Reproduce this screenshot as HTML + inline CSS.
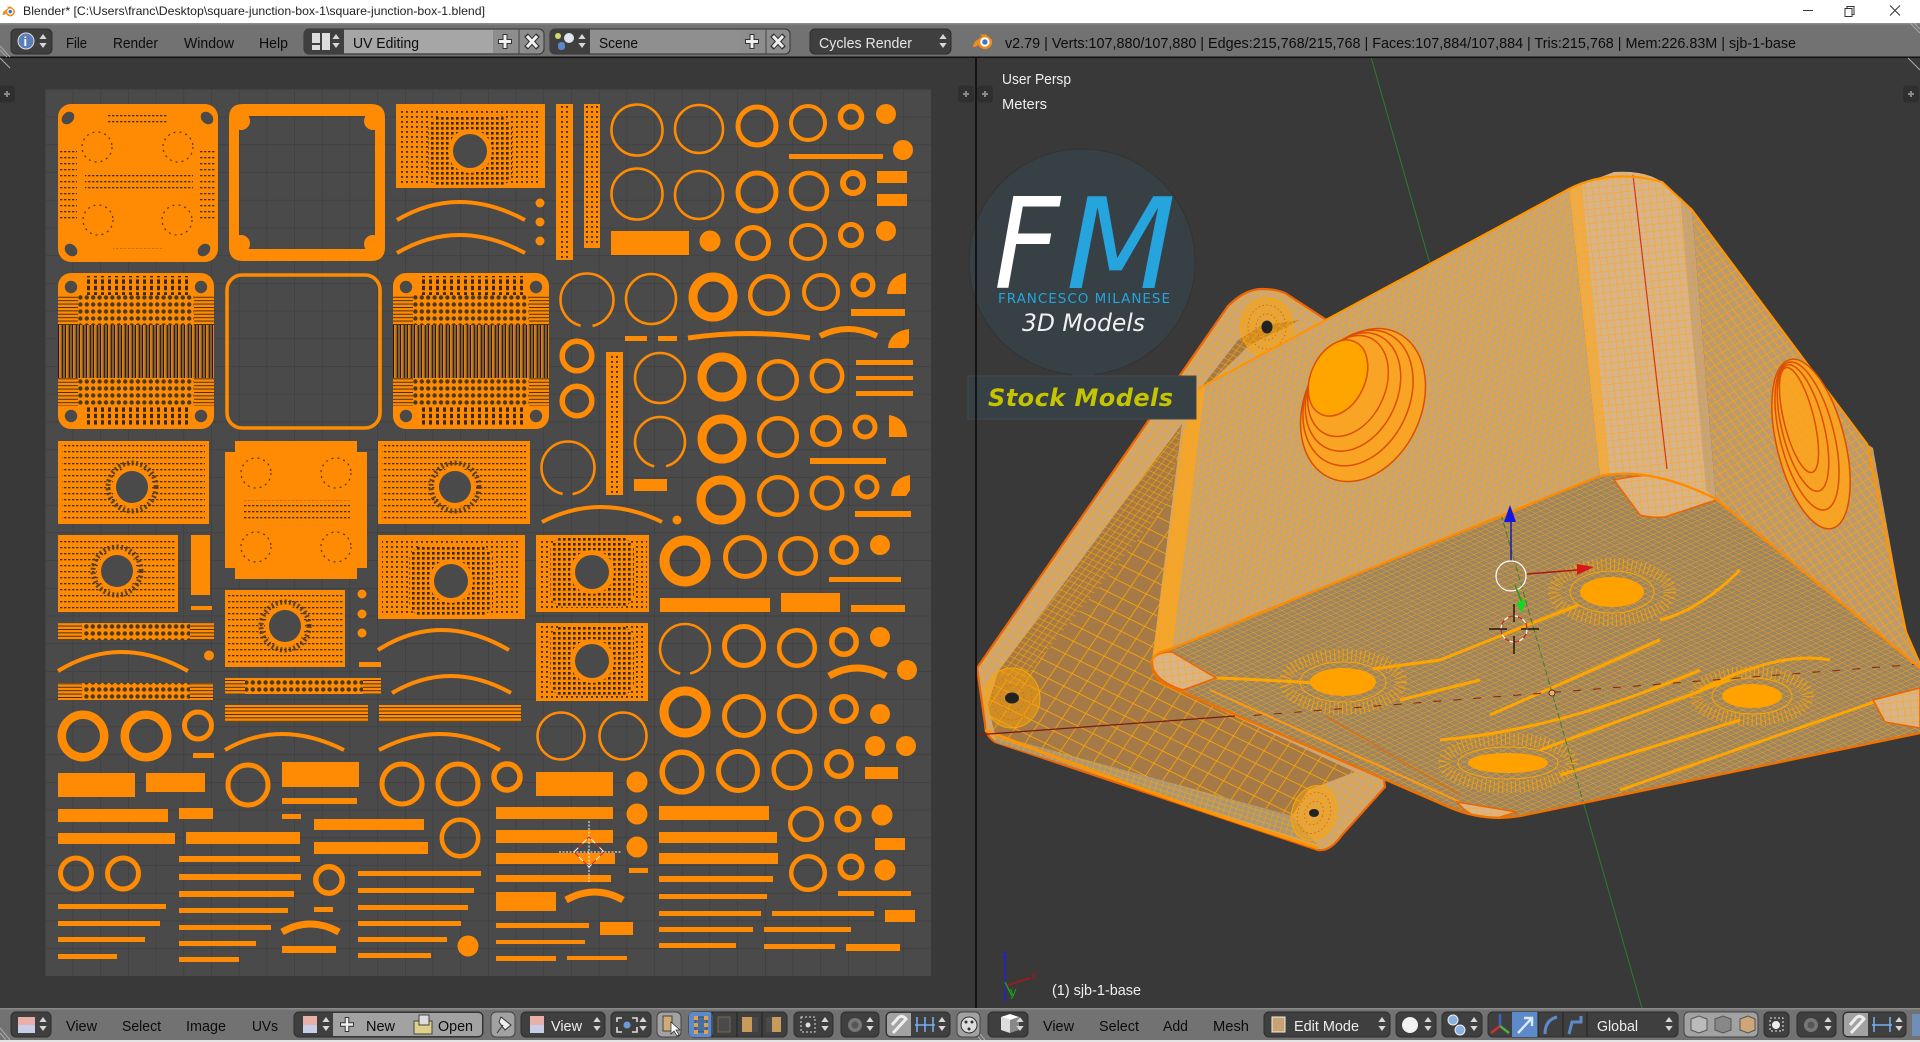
<!DOCTYPE html>
<html lang="en"><head><meta charset="utf-8"><title>Blender</title>
<style>
html,body{margin:0;padding:0;background:#393939;overflow:hidden}
svg{display:block;font-family:"Liberation Sans",sans-serif}
.h{font-size:15px;fill:#0c0c0c}
.w{font-size:15px;fill:#eee}
</style></head><body>
<svg xmlns="http://www.w3.org/2000/svg" width="1920" height="1042" viewBox="0 0 1920 1042">
<defs>
<pattern id="grid" x="45" y="89" width="27.69" height="27.72" patternUnits="userSpaceOnUse"><rect width="27.69" height="27.72" fill="#4a4a4a"/><path d="M0 0H27.69M0 0V27.72" stroke="#3d3d3d" stroke-width="1.2" fill="none"/></pattern>
<pattern id="dots" width="5" height="5" patternUnits="userSpaceOnUse"><rect x="1" y="1" width="2" height="1.8" fill="#3d3122"/></pattern>
<pattern id="fine" width="4" height="6" patternUnits="userSpaceOnUse"><rect x="0" y="1" width="2.4" height="1.3" fill="#3d3122"/></pattern>
<pattern id="circ" width="6.4" height="7" patternUnits="userSpaceOnUse"><rect width="6.4" height="7" fill="#fe8b03"/><circle cx="3.2" cy="3.5" r="2.2" fill="#4a3a20"/></pattern>
<pattern id="mesh2" width="5" height="5" patternUnits="userSpaceOnUse"><rect width="5" height="5" fill="#fe8b03"/><rect x="1" y="1" width="2.6" height="2.6" fill="#352a1a"/></pattern>
<pattern id="dash" width="7" height="6.4" patternUnits="userSpaceOnUse"><rect x="1" width="3" height="4.4" fill="#3a2a12"/></pattern>
<pattern id="stripe" width="7" height="4" patternUnits="userSpaceOnUse"><rect width="7" height="4" fill="#85602f"/><rect width="1.1" height="4" fill="#2a1300"/><rect x="1.1" width="1.5" height="4" fill="#f0880a"/><rect x="4.2" width=".8" height="4" fill="#2a1300"/></pattern>
<pattern id="hstripe" width="4" height="3.4" patternUnits="userSpaceOnUse"><rect width="4" height="3.4" fill="#fe8b03"/><rect width="4" height=".9" fill="#3a2a12"/></pattern>
<pattern id="mL" width="8" height="7" patternUnits="userSpaceOnUse" patternTransform="matrix(.88 -.474 -.159 .987 0 0)"><rect width="8" height="7" fill="#c6a47a"/><path d="M0 0H8M0 0V7" stroke="#ffa500" stroke-width="1.5"/></pattern>
<pattern id="mC" width="7" height="7" patternUnits="userSpaceOnUse" patternTransform="matrix(1 -.1 .11 1 0 0)"><rect width="7" height="7" fill="#d8b48a"/><path d="M0 0H7M0 0V7" stroke="#ffa61f" stroke-width="1.2"/></pattern>
<pattern id="mR" width="8" height="7" patternUnits="userSpaceOnUse" patternTransform="matrix(.6 .8 .85 -.5 0 0)"><rect width="8" height="7" fill="#bb9a72"/><path d="M0 0H8M0 0V7" stroke="#ffa500" stroke-width="1.4"/></pattern>
<pattern id="mB" width="6" height="6" patternUnits="userSpaceOnUse" patternTransform="matrix(.88 .474 .92 -.39 0 0)"><rect width="6" height="6" fill="#9b8565"/><path d="M0 0H6M0 0V6" stroke="#ffa500" stroke-width="1.05"/></pattern>
<pattern id="mD" width="17" height="15" patternUnits="userSpaceOnUse" patternTransform="matrix(.9 .44 -.56 .83 0 0)"><rect width="17" height="15" fill="#a57a47"/><path d="M0 0H17M0 0V15" stroke="#ffa500" stroke-width="1.6"/></pattern>
<pattern id="mF" width="6" height="6" patternUnits="userSpaceOnUse" patternTransform="matrix(.62 -.78 .9 .44 0 0)"><rect width="6" height="6" fill="#a57a47"/><path d="M0 0H6M0 0V6" stroke="#ffa500" stroke-width="1.2"/></pattern>
<pattern id="mO" width="8" height="8" patternUnits="userSpaceOnUse" patternTransform="matrix(.62 -.78 .9 .44 0 0)"><rect width="8" height="8" fill="#cda675"/><path d="M0 0H8M0 0V8" stroke="#ffa500" stroke-width="1.1"/></pattern>
<pattern id="mG" width="6" height="5" patternUnits="userSpaceOnUse" patternTransform="matrix(.95 .3 -.3 .95 0 0)"><rect width="6" height="5" fill="#ac9775"/><path d="M0 0H6M0 0V5" stroke="#ffa500" stroke-width="1.1"/></pattern>
<path id="ud" d="M0 -7L3.6 -2H-3.6ZM0 7L3.6 2H-3.6Z" fill="#d8d8d8"/>
<g id="plus"><rect x="-8" y="-8.5" width="16" height="17" rx="3" fill="#2e2e2e" opacity=".85"/><path d="M-3 0H3M0 -3V3" stroke="#888" stroke-width="2"/></g>
<g id="sq">
<rect x="0" y="0" width="156" height="156" rx="13" fill="#fe8b03"/>
<rect x="25" y="3" width="107" height="20" fill="url(#dash)"/>
<rect x="0" y="22" width="156" height="30" fill="url(#hstripe)"/>
<rect x="20" y="22" width="116" height="30" fill="url(#circ)"/>
<rect x="0" y="52" width="156" height="53" fill="url(#stripe)"/>
<rect x="0" y="105" width="156" height="28" fill="url(#hstripe)"/>
<rect x="20" y="105" width="116" height="28" fill="url(#circ)"/>
<rect x="25" y="133" width="107" height="20" fill="url(#dash)"/>
<circle cx="13" cy="14" r="6.2" fill="#4a4a4a"/><circle cx="143" cy="14" r="6.2" fill="#4a4a4a"/><circle cx="13" cy="143" r="6.2" fill="#4a4a4a"/><circle cx="143" cy="143" r="6.2" fill="#4a4a4a"/>
</g>
<g id="holeA"><rect x="-42" y="-35" width="84" height="70" rx="14" fill="url(#mesh2)"/><circle r="22" fill="#fe8b03"/><circle r="17" fill="#4a4a4a"/></g>
<g id="holeB"><circle r="24" fill="none" stroke="#3d3122" stroke-width="5" stroke-dasharray="2 2.5" opacity=".8"/><circle r="20" fill="#fe8b03"/><circle r="16" fill="#4a4a4a"/></g>
<g id="blogo"><path d="M-9 1L-1 -5L-4 -7H3L9 -2A7 7 0 0 1 -5 4L-7 6L-11 6Z" fill="#f08a1c"/><circle cx="2" cy="1" r="5" fill="#fff"/><circle cx="2" cy="1" r="2.8" fill="#3b78b8"/></g>
<clipPath id="botClip"><path d="M1152 661Q1155 652 1168 650L1600 476Q1650 466 1716 499L1920 668V733L1520 816Q1485 822 1451 808L1162 683Q1152 675 1152 661Z"/></clipPath>
<clipPath id="view"><rect x="977" y="58" width="943" height="950"/></clipPath>
</defs>

<rect width="1920" height="1042" fill="#393939"/>
<!-- title bar -->
<rect width="1920" height="23" fill="#fff"/>
<use href="#blogo" transform="translate(9,11) scale(.62)"/>
<text x="23" y="15" font-size="12" fill="#222" textLength="462" lengthAdjust="spacingAndGlyphs">Blender* [C:\Users\franc\Desktop\square-junction-box-1\square-junction-box-1.blend]</text>
<path d="M1803 10.5H1813" stroke="#333" stroke-width="1"/>
<path d="M1845 8.5h7v8h-7zM1847 8.5v-2h7v8h-2" fill="none" stroke="#333" stroke-width="1"/>
<path d="M1890 5.5L1900 15.5M1900 5.5L1890 15.5" stroke="#333" stroke-width="1"/>

<!-- UV editor -->
<rect x="45" y="89" width="886" height="887" fill="url(#grid)"/>

<g fill="#fe8b03">
<rect x="58" y="104" width="160" height="158" rx="13"/>
<rect x="60" y="147" width="17" height="75" fill="url(#fine)"/><rect x="200" y="147" width="15" height="75" fill="url(#fine)"/>
<rect x="108" y="113" width="60" height="12" fill="url(#fine)"/><rect x="85" y="175" width="108" height="18" fill="url(#fine)"/><rect x="113" y="248" width="49" height="5" fill="url(#fine)"/>
<path fill-rule="evenodd" d="M243 104H371Q385 104 385 118V247Q385 261 371 261H243Q229 261 229 247V118Q229 104 243 104ZM239 116V249H375V116Z"/>
<circle cx="241" cy="121" r="9"/><circle cx="373" cy="121" r="9"/><circle cx="241" cy="244" r="9"/><circle cx="373" cy="244" r="9"/>
<use href="#sq" x="58" y="273"/><use href="#sq" x="393" y="273"/>
<rect x="396" y="104" width="149" height="84"/><rect x="401" y="108" width="140" height="76" fill="url(#dots)"/>
<rect x="58" y="441" width="151" height="83"/><rect x="62" y="445" width="143" height="75" fill="url(#fine)"/>
<rect x="378" y="441" width="152" height="83"/><rect x="382" y="445" width="144" height="75" fill="url(#fine)"/>
<rect x="58" y="535" width="120" height="77"/><rect x="60" y="538" width="116" height="71" fill="url(#fine)"/>
<rect x="225" y="590" width="120" height="77"/><rect x="227" y="593" width="116" height="71" fill="url(#fine)"/>
<rect x="378" y="535" width="147" height="84"/><rect x="382" y="539" width="139" height="76" fill="url(#dots)"/>
<rect x="536" y="535" width="113" height="77"/><rect x="538" y="538" width="109" height="71" fill="url(#dots)"/>
<rect x="536" y="623" width="112" height="78"/><rect x="538" y="626" width="108" height="72" fill="url(#dots)"/>
<path d="M235 441H357V452H367V568H357V579H235V568H225V452H235Z"/>
<rect x="243" y="500" width="107" height="19" fill="url(#fine)"/>
<rect x="556" y="104" width="17" height="156"/><rect x="558" y="106" width="13" height="152" fill="url(#dots)"/>
<rect x="584" y="104" width="16" height="144"/><rect x="586" y="106" width="12" height="140" fill="url(#dots)"/>
<rect x="606" y="352" width="17" height="143"/><rect x="608" y="354" width="13" height="139" fill="url(#dots)"/>
<rect x="191" y="535" width="19" height="60"/><rect x="191" y="606" width="21" height="4"/>
<rect x="58" y="623" width="156" height="17" fill="url(#hstripe)"/><rect x="82" y="623" width="108" height="17" fill="url(#circ)"/>
<rect x="58" y="683" width="155" height="17" fill="url(#hstripe)"/><rect x="82" y="683" width="108" height="17" fill="url(#circ)"/>
<rect x="225" y="678" width="156" height="16" fill="url(#hstripe)"/><rect x="245" y="678" width="118" height="16" fill="url(#circ)"/>
<rect x="225" y="705" width="143" height="17" fill="url(#hstripe)"/><rect x="270" y="707" width="54" height="13" fill="url(#hstripe)"/>
<rect x="379" y="705" width="142" height="17" fill="url(#hstripe)"/><rect x="425" y="707" width="50" height="13" fill="url(#hstripe)"/>
<rect x="877" y="171" width="30" height="12"/><rect x="877" y="194" width="30" height="12"/><rect x="611" y="231" width="78" height="24"/>
<rect x="789" y="154" width="94" height="5"/><rect x="851" y="309" width="54" height="7"/><rect x="625" y="336" width="22" height="5"/><rect x="658" y="336" width="19" height="5"/>
<rect x="856" y="360" width="57" height="5"/><rect x="856" y="376" width="57" height="4"/><rect x="856" y="391" width="57" height="5"/><rect x="810" y="458" width="76" height="6"/><rect x="634" y="479" width="33" height="12"/><rect x="855" y="511" width="56" height="6"/>
<rect x="359" y="662" width="22" height="5"/><rect x="193" y="753" width="21" height="5"/>
<rect x="58" y="773" width="77" height="24"/><rect x="146" y="773" width="59" height="19"/><rect x="282" y="762" width="77" height="25"/><rect x="282" y="798" width="75" height="6"/>
<rect x="536" y="772" width="77" height="24"/><rect x="58" y="809" width="110" height="13"/><rect x="179" y="808" width="34" height="11"/><rect x="282" y="814" width="19" height="5"/>
<rect x="314" y="819" width="110" height="11"/><rect x="314" y="842" width="114" height="12"/><rect x="58" y="833" width="117" height="11"/><rect x="186" y="832" width="114" height="12"/>
<rect x="179" y="856" width="121" height="6"/><rect x="179" y="874" width="122" height="6"/><rect x="179" y="891" width="115" height="6"/><rect x="179" y="908" width="109" height="5"/><rect x="179" y="925" width="92" height="5"/><rect x="179" y="941" width="77" height="5"/><rect x="179" y="957" width="60" height="5"/>
<rect x="314" y="907" width="19" height="5"/><rect x="282" y="946" width="54" height="7"/>
<rect x="358" y="871" width="123" height="5"/><rect x="358" y="888" width="116" height="5"/><rect x="358" y="905" width="110" height="5"/><rect x="358" y="921" width="103" height="5"/><rect x="358" y="937" width="89" height="5"/><rect x="358" y="953" width="73" height="5"/>
<rect x="58" y="904" width="108" height="5"/><rect x="58" y="921" width="102" height="5"/><rect x="58" y="937" width="87" height="5"/><rect x="58" y="954" width="59" height="5"/>
<rect x="829" y="577" width="72" height="5"/><rect x="660" y="598" width="110" height="14"/><rect x="781" y="593" width="59" height="19"/><rect x="851" y="605" width="54" height="7"/>
<rect x="865" y="767" width="33" height="12"/><rect x="496" y="807" width="117" height="12"/><rect x="496" y="830" width="117" height="13"/><rect x="496" y="853" width="119" height="11"/><rect x="496" y="875" width="115" height="7"/><rect x="496" y="892" width="60" height="19"/><rect x="496" y="923" width="93" height="5"/><rect x="600" y="922" width="33" height="13"/><rect x="496" y="940" width="89" height="4"/><rect x="496" y="956" width="60" height="5"/><rect x="567" y="956" width="60" height="4"/><rect x="629" y="868" width="19" height="5"/>
<rect x="659" y="806" width="110" height="14"/><rect x="659" y="832" width="118" height="11"/><rect x="659" y="853" width="119" height="11"/><rect x="659" y="876" width="114" height="6"/><rect x="659" y="894" width="108" height="5"/><rect x="659" y="911" width="102" height="5"/><rect x="659" y="927" width="94" height="5"/><rect x="659" y="943" width="77" height="5"/><rect x="772" y="911" width="102" height="5"/><rect x="764" y="927" width="87" height="5"/><rect x="764" y="944" width="71" height="5"/><rect x="846" y="944" width="54" height="7"/><rect x="885" y="910" width="30" height="12"/><rect x="838" y="891" width="73" height="5"/><rect x="875" y="838" width="30" height="12"/>
<circle cx="886" cy="114" r="10"/><circle cx="903" cy="150" r="10"/><circle cx="710" cy="241" r="10.5"/><circle cx="886" cy="231" r="10"/>
<circle cx="540" cy="203" r="4.5"/><circle cx="540" cy="222" r="4.5"/><circle cx="540" cy="241" r="4.5"/><circle cx="677" cy="520" r="4.5"/>
<circle cx="362" cy="594" r="4.5"/><circle cx="362" cy="614" r="4.5"/><circle cx="362" cy="633" r="4.5"/><circle cx="209" cy="655.5" r="5"/>
<circle cx="468" cy="946" r="10.5"/><circle cx="880" cy="545" r="10"/><circle cx="880" cy="637" r="10"/><circle cx="907" cy="670" r="10"/><circle cx="880" cy="714" r="10"/><circle cx="875" cy="746" r="10"/><circle cx="906" cy="746" r="10"/>
<circle cx="637" cy="782" r="10.5"/><circle cx="637" cy="814" r="10.5"/><circle cx="637" cy="847" r="10.5"/><circle cx="882" cy="815" r="10.5"/><circle cx="885" cy="870" r="10.5"/>
<path d="M887 294Q888 276 906 273V294Z"/><path d="M888 348Q889 332 909 329V343L905 348Z"/><path d="M889 415Q907 418 907 437H889Z"/><path d="M891 496Q892 478 910 475V490L906 496Z"/>
</g>
<g fill="#4a4a4a">
<ellipse cx="68" cy="118" rx="7" ry="5.5" transform="rotate(-45 68 118)"/><ellipse cx="207" cy="118" rx="7" ry="5.5" transform="rotate(45 207 118)"/><ellipse cx="71" cy="250" rx="7" ry="5.5" transform="rotate(45 71 250)"/><ellipse cx="204" cy="250" rx="7" ry="5.5" transform="rotate(-45 204 250)"/>
</g>
<g fill="none" stroke="#4a3a1e" stroke-width="1.2" stroke-dasharray="2 4">
<circle cx="97" cy="147" r="15"/><circle cx="178" cy="147" r="15"/><circle cx="98" cy="220" r="15"/><circle cx="177" cy="220" r="15"/>
<circle cx="256" cy="473" r="15"/><circle cx="336" cy="473" r="15"/><circle cx="256" cy="547" r="15"/><circle cx="336" cy="547" r="15"/>
</g>
<use href="#holeA" x="470" y="151"/><use href="#holeA" x="451" y="581"/><use href="#holeA" x="592" y="572"/><use href="#holeA" x="592" y="661"/>
<use href="#holeB" x="132" y="487"/><use href="#holeB" x="455" y="487"/><use href="#holeB" x="117" y="571"/><use href="#holeB" x="285" y="626"/>
<rect x="227" y="275" width="153" height="153" rx="15" fill="none" stroke="#fe8b03" stroke-width="3.6"/>
<g fill="none" stroke="#fe8b03">
<g stroke-width="2.6">
<circle cx="637" cy="130" r="25.5"/><circle cx="699" cy="129" r="24"/><circle cx="637" cy="194" r="25.5"/><circle cx="699" cy="195" r="24"/>
<circle cx="587" cy="300" r="26.5" stroke-dasharray="155 12" stroke-dashoffset="-48"/><circle cx="651" cy="299" r="25"/><circle cx="660" cy="378" r="25"/><circle cx="660" cy="442" r="25" stroke-dasharray="145 12" stroke-dashoffset="-45"/><circle cx="568" cy="468" r="26.5" stroke-dasharray="157 10" stroke-dashoffset="-47"/>
<circle cx="685" cy="649" r="25" stroke-dasharray="147 10" stroke-dashoffset="-44"/><circle cx="561" cy="736" r="23.5"/><circle cx="623" cy="736" r="23.5"/>
</g>
<circle cx="757" cy="126" r="19" stroke-width="5"/><circle cx="808" cy="123" r="17" stroke-width="4"/><circle cx="851" cy="117" r="10.5" stroke-width="5.5"/>
<circle cx="757" cy="192" r="19" stroke-width="5"/><circle cx="809" cy="191" r="18" stroke-width="4.5"/><circle cx="853" cy="183" r="10" stroke-width="6"/>
<circle cx="753" cy="243" r="15.5" stroke-width="5"/><circle cx="808" cy="242" r="17" stroke-width="4"/><circle cx="851" cy="235" r="10.5" stroke-width="5"/>
<circle cx="713" cy="297" r="20" stroke-width="9"/><circle cx="769" cy="295" r="18.8" stroke-width="4.5"/><circle cx="821" cy="292" r="17" stroke-width="4"/><circle cx="863" cy="285" r="9.8" stroke-width="5.5"/>
<circle cx="577" cy="356" r="14.8" stroke-width="5.5"/><circle cx="577" cy="401" r="14.8" stroke-width="5.5"/>
<circle cx="722" cy="377" r="20" stroke-width="9"/><circle cx="778" cy="380" r="18.8" stroke-width="4.5"/><circle cx="827" cy="376" r="15.2" stroke-width="4.5"/>
<circle cx="722" cy="439" r="20" stroke-width="9"/><circle cx="778" cy="437" r="18.8" stroke-width="4.5"/><circle cx="826" cy="431" r="13.5" stroke-width="5"/><circle cx="865" cy="427" r="10" stroke-width="5"/>
<circle cx="721" cy="500" r="20" stroke-width="9"/><circle cx="778" cy="496" r="18.8" stroke-width="4.5"/><circle cx="827" cy="493" r="15.2" stroke-width="4.5"/><circle cx="867" cy="487" r="10" stroke-width="5"/>
<circle cx="83" cy="736" r="21.2" stroke-width="8.5"/><circle cx="146" cy="736" r="21.2" stroke-width="8.5"/><circle cx="198" cy="725.5" r="13.5" stroke-width="5"/>
<circle cx="248" cy="785" r="20" stroke-width="5"/><circle cx="402" cy="784" r="20" stroke-width="5"/><circle cx="458" cy="784" r="20" stroke-width="5"/><circle cx="507" cy="777" r="13" stroke-width="5.5"/>
<circle cx="460" cy="838" r="18.2" stroke-width="4.5"/><circle cx="76" cy="873.5" r="15.5" stroke-width="5"/><circle cx="123" cy="873.5" r="15.5" stroke-width="5"/><circle cx="329" cy="880" r="13.2" stroke-width="5.5"/>
<circle cx="685" cy="561" r="20.5" stroke-width="10"/><circle cx="745" cy="557" r="19.5" stroke-width="5"/><circle cx="798" cy="556" r="17.8" stroke-width="4.5"/><circle cx="844" cy="550" r="12.2" stroke-width="5.5"/>
<circle cx="744" cy="646" r="19.5" stroke-width="5"/><circle cx="797" cy="648" r="17.8" stroke-width="4.5"/><circle cx="844" cy="642" r="12.2" stroke-width="5.5"/>
<circle cx="685" cy="712" r="21" stroke-width="9"/><circle cx="744" cy="716" r="19.5" stroke-width="5"/><circle cx="797" cy="714" r="17.8" stroke-width="4.5"/><circle cx="844" cy="709" r="12.2" stroke-width="5.5"/>
<circle cx="682" cy="772" r="19.8" stroke-width="5.5"/><circle cx="738" cy="771" r="19.5" stroke-width="5"/><circle cx="792" cy="770" r="18.3" stroke-width="4.5"/><circle cx="839" cy="764" r="12.2" stroke-width="5.5"/>
<circle cx="806" cy="824" r="15.8" stroke-width="4.5"/><circle cx="808" cy="873" r="16.8" stroke-width="4.5"/><circle cx="848" cy="819" r="10.8" stroke-width="5.5"/><circle cx="851" cy="867" r="10.8" stroke-width="5.5"/>
<g stroke-width="4">
<path d="M397 220Q458 184 525 220"/><path d="M397 253Q458 217 525 253"/><path d="M542 522Q600 492 662 522"/><path d="M378 650Q440 610 509 650"/><path d="M58 671Q120 633 188 671"/><path d="M392 693Q450 659 511 693"/><path d="M225 750Q280 718 344 750"/><path d="M379 750Q440 718 500 750"/>
<path d="M688 338Q750 329 810 338" stroke-width="5"/><path d="M820 336Q848 322 877 336" stroke-width="6"/><path d="M829 676Q857 660 886 676" stroke-width="7"/><path d="M282 932Q310 916 339 932" stroke-width="7"/><path d="M566 900Q595 884 623 900" stroke-width="7"/>
</g>
</g>
<g fill="none">
<path d="M559 852H621M589 821V882" stroke="#fff" stroke-dasharray="2 1.5" stroke-width="1"/>
<path d="M574 852L589 837L604 852L589 867Z" stroke="#fff" stroke-dasharray="6 6"/>
<path d="M574 852L589 837L604 852L589 867Z" stroke="#d22" stroke-dasharray="6 6" stroke-dashoffset="6"/>
</g>

<!-- 3D viewport -->
<g clip-path="url(#view)">
<path d="M1371 57L1642 1008" stroke="#2b7d2b" stroke-width="1"/>
<!-- back cover -->
<path d="M1228 306Q1245 289 1262 289Q1275 289 1285 293L1325 319L1385 787L1342 835Q1330 852 1318 850L995 742Q985 735 985 724L977 668Z" fill="url(#mO)" stroke="#ee6400" stroke-width="2.2"/>
<path d="M1182 424L1152 661L1162 683L1355 772L1308 790L1292 816L995 735L988 705L998 672Z" fill="url(#mD)"/>
<path d="M1182 424L1170 500L1015 690L998 672Z" fill="url(#mF)"/>
<path d="M1300 320L1250 345L1215 378L1200 389L1238 340L1262 325Z" fill="url(#mF)"/>
<path d="M995 735L1292 816L1318 845L995 742Z" fill="url(#mG)"/>
<path d="M985 730Q1150 795 1318 848" fill="none" stroke="#ff9500" stroke-width="3"/>
<path d="M975 735L1235 716" stroke="#7a1c10" stroke-width="1.3"/>
<g fill="#ffa500" fill-opacity=".45" stroke="#ffa500" stroke-width="1">
<ellipse cx="1267" cy="327" rx="26" ry="29"/><ellipse cx="1012" cy="698" rx="28" ry="30"/><ellipse cx="1314" cy="813" rx="22" ry="28" transform="rotate(20 1314 813)"/>
</g>
<g fill="none" stroke="#ee6400" stroke-width="1" stroke-dasharray="1.5 2.5">
<ellipse cx="1267" cy="327" rx="19" ry="22"/><ellipse cx="1012" cy="698" rx="20" ry="22"/><ellipse cx="1314" cy="813" rx="16" ry="21" transform="rotate(20 1314 813)"/>
<ellipse cx="1267" cy="327" rx="11" ry="13"/><ellipse cx="1012" cy="698" rx="12" ry="13"/><ellipse cx="1314" cy="813" rx="9" ry="12" transform="rotate(20 1314 813)"/>
</g>
<ellipse cx="1267" cy="327" rx="5.5" ry="6.5" fill="#222"/><ellipse cx="1012" cy="698" rx="7" ry="5.5" fill="#222"/><ellipse cx="1314" cy="813" rx="5" ry="4" fill="#222"/>

<!-- main box faces -->
<path d="M1198 389L1569 189L1600 476L1152 661L1183 435Z" fill="url(#mL)"/>
<path d="M1569 189L1614 172Q1645 170 1662 182L1692 210L1716 499Q1650 465 1600 476Z" fill="url(#mC)"/>
<path d="M1692 210L1867 444L1873 448L1906 632L1920 664V670L1716 499Z" fill="url(#mR)"/>
<path d="M1198 389L1205 387L1172 652L1152 661L1183 435Z" fill="#ffa51a" fill-opacity=".75"/>
<path d="M1569 189L1600 476L1610 474L1582 184Z" fill="#ffa51a" fill-opacity=".55"/>
<path d="M1692 210L1716 499L1706 490L1680 196Z" fill="#a98a60" fill-opacity=".35"/>
<path d="M1633 175L1667 469" stroke="#d9351a" stroke-width="1.2" fill="none"/>
<path d="M1198 389L1569 189Q1610 168 1662 182L1692 210L1867 444L1906 632L1920 664" fill="none" stroke="#ff9500" stroke-width="2.2"/>
<!-- side bosses -->
<g fill="none" stroke="#dc4f00" stroke-width="1.5">
<ellipse cx="1363" cy="405" rx="58" ry="80" transform="rotate(25 1363 405)" fill="#ffa51a" fill-opacity=".85"/>
<ellipse cx="1358" cy="398" rx="51" ry="71" transform="rotate(25 1358 398)"/>
<ellipse cx="1353" cy="392" rx="44" ry="62" transform="rotate(25 1353 392)"/>
<ellipse cx="1348" cy="386" rx="37" ry="53" transform="rotate(25 1348 386)"/>
<ellipse cx="1338" cy="378" rx="27" ry="40" transform="rotate(25 1338 378)" fill="#ffa500"/>
<ellipse cx="1811" cy="444" rx="34" ry="87" transform="rotate(-14 1811 444)" fill="#ffa51a" fill-opacity=".85"/>
<ellipse cx="1807" cy="436" rx="27" ry="76" transform="rotate(-14 1807 436)"/>
<ellipse cx="1803" cy="428" rx="21" ry="65" transform="rotate(-14 1803 428)"/>
<ellipse cx="1799" cy="420" rx="15" ry="54" transform="rotate(-14 1799 420)"/>
</g>
<!-- bottom face -->
<path d="M1152 661Q1155 652 1168 650L1600 476Q1650 466 1716 499L1920 668V733L1520 816Q1485 822 1451 808L1162 683Q1152 675 1152 661Z" fill="url(#mB)"/>
<g clip-path="url(#botClip)">
<g fill="none" stroke="#ffa500">
<ellipse cx="1612" cy="592" rx="58" ry="28" stroke-width="12" stroke-dasharray="1.1 3.2" opacity=".8"/>
<ellipse cx="1343" cy="682" rx="58" ry="27" stroke-width="12" stroke-dasharray="1.1 3.2" opacity=".8"/>
<ellipse cx="1508" cy="763" rx="64" ry="24" stroke-width="12" stroke-dasharray="1.1 3.2" opacity=".8"/>
<ellipse cx="1752" cy="696" rx="56" ry="24" stroke-width="12" stroke-dasharray="1.1 3.2" opacity=".8"/>
<g stroke-width="1"><ellipse cx="1612" cy="592" rx="42" ry="21"/><ellipse cx="1343" cy="682" rx="43" ry="20"/><ellipse cx="1508" cy="763" rx="50" ry="16"/><ellipse cx="1752" cy="696" rx="40" ry="18"/></g>
<g stroke-width="3">
<path d="M1216 678Q1270 680 1313 683"/><path d="M1373 669L1440 660L1578 605"/><path d="M1660 620Q1700 610 1740 570"/><path d="M1490 715L1660 640"/><path d="M1400 700L1480 680"/>
<path d="M1440 740Q1560 730 1700 670"/><path d="M1540 750L1730 680"/><path d="M1560 775L1740 720"/><path d="M1620 790L1880 700"/><path d="M1700 690Q1780 650 1830 660"/>
</g>
</g>
<path d="M1210 690L1460 802" fill="none" stroke="#ff9a10" stroke-width="2"/>
<path d="M1327 717L1460 795" fill="none" stroke="#e86a00" stroke-width="1.2"/>
<g fill="#ffa200">
<ellipse cx="1612" cy="592" rx="32" ry="15"/><ellipse cx="1343" cy="682" rx="33" ry="14"/><ellipse cx="1508" cy="763" rx="40" ry="10"/><ellipse cx="1752" cy="696" rx="30" ry="12"/>
</g>
<path d="M1234 717L1920 664" stroke="#8a2a10" stroke-width="1.1" stroke-dasharray="8 12" fill="none"/>
<path d="M1501 514L1642 1008" stroke="#3f7f2a" stroke-width="1" stroke-dasharray="6 3" fill="none"/>
<g fill="url(#mC)" stroke="#ee6400" stroke-width="1.5">
<path d="M1614 480Q1660 470 1700 480L1716 500L1665 517Q1650 518 1640 515Z"/>
<path d="M1152 661Q1155 652 1172 652L1216 678L1183 690Q1152 680 1152 661Z"/>
<path d="M1457 802L1517 812L1490 820Q1470 818 1457 802Z"/>
<path d="M1873 700L1920 688V728L1885 722Z"/>
</g>
</g>
<path d="M1152 661Q1155 652 1168 650L1600 476Q1650 466 1716 499L1920 668" fill="none" stroke="#ff8a00" stroke-width="2.4"/>
<path d="M1152 661Q1152 675 1162 683L1451 808Q1485 822 1520 816L1920 733" fill="none" stroke="#f07000" stroke-width="2.4"/>

<!-- gizmo -->
<path d="M1511 520V561" stroke="#1a1ab0" stroke-width="1.5"/><path d="M1510 505L1516 522H1504Z" fill="#1414e0"/>
<circle cx="1511" cy="576" r="15" fill="none" stroke="#fff" stroke-width="1.2"/>
<path d="M1527 574L1577 570" stroke="#b01515" stroke-width="1.5"/><path d="M1594 567L1577 564V575Z" fill="#d81818"/>
<path d="M1515 585L1522 603" stroke="#18a018" stroke-width="1.5"/><path d="M1522 613L1516 603L1526 599Z" fill="#10d820"/>
<circle cx="1514" cy="629" r="13" fill="none" stroke="#fff" stroke-width="1.2" stroke-dasharray="5 5"/>
<circle cx="1514" cy="629" r="13" fill="none" stroke="#d02020" stroke-width="1.2" stroke-dasharray="5 5" stroke-dashoffset="5"/>
<path d="M1489 629H1507M1521 629H1539M1514 604V622M1514 636V654" stroke="#000" stroke-width="1.2"/>
<circle cx="1552" cy="693" r="3" fill="#f3b060" stroke="#222" stroke-width=".8"/>
</g>

<!-- Logo -->
<circle cx="1082" cy="262" r="113" fill="#374045" stroke="#333" stroke-width="1"/>
<path d="M1070 372H1096L1090 380H1076Z" fill="#374045"/>
<rect x="968" y="376" width="228" height="43" fill="#374045"/>
<rect x="968" y="376" width="228" height="43" fill="none" stroke="#454a4c" stroke-width="1"/>
<text x="994" y="288" font-family="DejaVu Sans" font-style="oblique" font-size="126" fill="#fff" textLength="66" lengthAdjust="spacingAndGlyphs">F</text>
<text x="1066" y="288" font-family="DejaVu Sans" font-style="oblique" font-size="126" fill="#25a4de" textLength="110" lengthAdjust="spacingAndGlyphs">M</text>
<text x="998" y="303" font-family="DejaVu Sans" font-size="13.5" fill="#25a4de" textLength="172" lengthAdjust="spacing">FRANCESCO MILANESE</text>
<text x="1022" y="331" font-family="DejaVu Sans" font-style="oblique" font-size="24" fill="#f0f0f0" textLength="123" lengthAdjust="spacingAndGlyphs">3D Models</text>
<text x="988" y="406" font-family="DejaVu Sans" font-style="oblique" font-weight="700" font-size="24" fill="#c5c400" textLength="185" lengthAdjust="spacing">Stock Models</text>

<!-- splits -->
<rect x="975" y="57" width="2" height="951" fill="#141414"/>
<use href="#plus" x="7" y="94"/><use href="#plus" x="966" y="94"/><use href="#plus" x="985" y="94"/><use href="#plus" x="1911" y="94"/>
<text class="w" x="1002" y="84" textLength="69" lengthAdjust="spacingAndGlyphs">User Persp</text>
<text class="w" x="1002" y="109" textLength="45" lengthAdjust="spacingAndGlyphs">Meters</text>
<path d="M1005 1002V954" stroke="#2222cc" stroke-width="1.5"/><path d="M1005 986L1030 978" stroke="#b01515" stroke-width="1.5"/><path d="M1005 982L1012 996" stroke="#18a018" stroke-width="1.5"/>
<text x="1002" y="958" font-size="11" fill="#2222cc">z</text><text x="1031" y="979" font-size="11" fill="#b01515">x</text><text x="1010" y="996" font-size="13" fill="#18a018">y</text>
<text class="w" x="1052" y="995" textLength="89" lengthAdjust="spacingAndGlyphs">(1) sjb-1-base</text>

<!-- top header -->
<rect x="0" y="23" width="1920" height="34" fill="#727272"/>
<rect x="0" y="23" width="1920" height="1.5" fill="#8a8a8a"/>
<rect x="0" y="56.5" width="1920" height="1.5" fill="#111"/>
<path d="M0 46L10 57M0 50L7 57M1910 23L1920 33M1914 23L1920 29M0 58L10 68M1908 58L1920 70" stroke="#aaa" stroke-width="1"/>
<rect x="11" y="29" width="41" height="25" rx="5" fill="#3f3f3f" stroke="#2d2d2d"/>
<circle cx="26" cy="41" r="8" fill="#5a7fb8" stroke="#ddd"/><text x="23.5" y="46" font-size="13" font-weight="700" fill="#fff">i</text>
<use href="#ud" x="43" y="41"/>
<text class="h" x="66" y="48" textLength="21" lengthAdjust="spacingAndGlyphs">File</text>
<text class="h" x="113" y="48" textLength="45" lengthAdjust="spacingAndGlyphs">Render</text>
<text class="h" x="184" y="48" textLength="50" lengthAdjust="spacingAndGlyphs">Window</text>
<text class="h" x="259" y="48" textLength="29" lengthAdjust="spacingAndGlyphs">Help</text>
<rect x="304" y="29" width="240" height="25" rx="5" fill="#8d8d8d" stroke="#333"/>
<path d="M309 29h35v25h-35q-5 0-5-5v-15q0-5 5-5z" fill="#3f3f3f"/>
<rect x="344" y="30" width="149" height="23" fill="#a6a6a6"/>
<rect x="312" y="33" width="8" height="10" fill="#ddd"/><rect x="322" y="33" width="8" height="17" fill="#ddd"/><rect x="312" y="45" width="8" height="5" fill="#ddd"/>
<use href="#ud" x="336" y="41"/>
<text class="h" x="353" y="48" textLength="66" lengthAdjust="spacingAndGlyphs">UV Editing</text>
<g fill="none">
<path d="M505 34V49M498 41.5H512" stroke="#333" stroke-width="5"/><path d="M505 35V48M499 41.5H511" stroke="#f2f2f2" stroke-width="3"/>
<path d="M526 35L538 48M538 35L526 48" stroke="#333" stroke-width="5"/><path d="M527 36L537 47M537 36L527 47" stroke="#f2f2f2" stroke-width="3"/>
</g>
<path d="M519 29V54" stroke="#444"/>
<rect x="550" y="29" width="240" height="25" rx="5" fill="#8d8d8d" stroke="#333"/>
<path d="M555 29h35v25h-35q-5 0-5-5v-15q0-5 5-5z" fill="#3f3f3f"/>
<rect x="590" y="30" width="150" height="23" fill="#8f8f8f"/>
<circle cx="558" cy="36" r="3" fill="#d8d86a"/><circle cx="569" cy="38" r="5" fill="#dfe6ee"/><rect x="558" y="42" width="7" height="8" rx="3" fill="#5a87c8"/>
<use href="#ud" x="582" y="41"/>
<text class="h" x="599" y="48" textLength="39" lengthAdjust="spacingAndGlyphs">Scene</text>
<g fill="none">
<path d="M752 34V49M745 41.5H759" stroke="#333" stroke-width="5"/><path d="M752 35V48M746 41.5H758" stroke="#eee" stroke-width="3"/>
<path d="M772 35L784 48M784 35L772 48" stroke="#333" stroke-width="5"/><path d="M773 36L783 47M783 36L773 47" stroke="#eee" stroke-width="3"/>
</g>
<path d="M766 29V54" stroke="#444"/>
<rect x="810" y="29" width="141" height="25" rx="5" fill="#3f3f3f" stroke="#2d2d2d"/>
<text x="819" y="48" font-size="15" fill="#e6e6e6" textLength="93" lengthAdjust="spacingAndGlyphs">Cycles Render</text>
<use href="#ud" x="943" y="41"/>
<use href="#blogo" transform="translate(983,41) scale(.95)"/>
<text class="h" x="1005" y="48" textLength="791" lengthAdjust="spacingAndGlyphs">v2.79 | Verts:107,880/107,880 | Edges:215,768/215,768 | Faces:107,884/107,884 | Tris:215,768 | Mem:226.83M | sjb-1-base</text>

<!-- bottom header -->
<rect x="0" y="1008" width="1920" height="32" fill="#727272"/>
<rect x="0" y="1008" width="1920" height="1.5" fill="#8a8a8a"/>
<rect x="0" y="1040" width="1920" height="2" fill="#e4e4e4"/>
<path d="M0 1028L10 1040M0 1033L6 1040M975 1028L985 1040M975 1033L981 1040" stroke="#aaa"/>
<g fill="#3f3f3f" stroke="#2d2d2d">
<rect x="11" y="1012" width="40" height="25" rx="5"/>
<rect x="294" y="1012" width="189" height="25" rx="5"/>
<rect x="521" y="1012" width="84" height="25" rx="5"/>
<rect x="611" y="1012" width="40" height="25" rx="5"/>
<rect x="689" y="1012" width="98" height="25" rx="5"/>
<rect x="794" y="1012" width="39" height="25" rx="5"/>
<rect x="841" y="1012" width="38" height="25" rx="5"/>
<rect x="886" y="1012" width="64" height="25" rx="5"/>
<rect x="988" y="1012" width="40" height="25" rx="5"/>
<rect x="1264" y="1012" width="126" height="25" rx="5"/>
<rect x="1396" y="1012" width="40" height="25" rx="5"/>
<rect x="1442" y="1012" width="40" height="25" rx="5"/>
<rect x="1488" y="1012" width="190" height="25" rx="5"/>
<rect x="1764" y="1012" width="25" height="25" rx="5"/>
<rect x="1797" y="1012" width="39" height="25" rx="5"/>
<rect x="1843" y="1012" width="63" height="25" rx="5"/>
</g>
<g fill="#a2a2a2">
<path d="M333 1013H409V1036H333Z"/><path d="M409 1013H478q4 0 4 4v15q0 4-4 4H409Z"/>
<rect x="491" y="1012" width="24" height="25" rx="5" stroke="#444"/>
<rect x="657" y="1012" width="24" height="25" rx="5" stroke="#444"/>
<path d="M891 1013H911V1036H891q-4 0-4-4V1017q0-4 4-4Z"/>
<rect x="957" y="1012" width="23" height="25" rx="5" stroke="#444"/>
<rect x="1684" y="1012" width="74" height="25" rx="5" stroke="#444"/>
<path d="M1848 1013H1868V1036H1848q-4 0-4-4V1017q0-4 4-4Z"/>
</g>
<rect x="18" y="1017" width="17" height="8" fill="#e8b0a8"/><rect x="18" y="1025" width="17" height="8" fill="#c8cee8"/><use href="#ud" x="43" y="1024"/>
<text class="h" x="66" y="1031" textLength="31" lengthAdjust="spacingAndGlyphs">View</text>
<text class="h" x="122" y="1031" textLength="39" lengthAdjust="spacingAndGlyphs">Select</text>
<text class="h" x="186" y="1031" textLength="40" lengthAdjust="spacingAndGlyphs">Image</text>
<text class="h" x="252" y="1031" textLength="26" lengthAdjust="spacingAndGlyphs">UVs</text>
<rect x="303" y="1016" width="14" height="9" fill="#e8b0a8"/><rect x="303" y="1025" width="14" height="8" fill="#c8cee8"/><use href="#ud" x="326" y="1024"/>
<path d="M347 1017V1032M340 1024.5H354" stroke="#333" stroke-width="4.5"/><path d="M347 1018V1031M341 1024.5H353" stroke="#f2f2f2" stroke-width="2.6"/>
<text class="h" x="366" y="1031" textLength="29" lengthAdjust="spacingAndGlyphs">New</text>
<path d="M414 1021H432V1034H414Z" fill="#e0cf8a" stroke="#444"/><rect x="419" y="1015" width="10" height="10" fill="#ddd" stroke="#444"/>
<text class="h" x="438" y="1031" textLength="35" lengthAdjust="spacingAndGlyphs">Open</text>
<path d="M497 1033L503 1025M501 1017L511 1025L505 1030L499 1022Z" fill="#eee" stroke="#333"/>
<rect x="530" y="1016" width="14" height="9" fill="#e8b0a8"/><rect x="530" y="1025" width="14" height="8" fill="#c8cee8"/>
<text x="551" y="1031" font-size="15" fill="#eee" textLength="31" lengthAdjust="spacingAndGlyphs">View</text><use href="#ud" x="597" y="1024"/>
<path d="M617 1022v-4h5M632 1018h5v4M637 1027v5h-5M622 1032h-5v-5" fill="none" stroke="#ddd" stroke-width="1.6"/><circle cx="627" cy="1025" r="3.5" fill="#6a9ad8"/><use href="#ud" x="643" y="1024"/>
<rect x="663" y="1016" width="9" height="15" fill="#d0ab7a" stroke="#444"/><path d="M671 1022V1034L674 1031L677 1036L679 1035L676 1030H680Z" fill="#fff" stroke="#222" stroke-width=".7"/>
<rect x="689" y="1012" width="24" height="25" rx="4" fill="#5d8ac8"/>
<rect x="695" y="1017" width="12" height="15" fill="#4a6f9e" stroke="#2f4a6c"/>
<g fill="#e0a050"><rect x="694" y="1016" width="4" height="4"/><rect x="704" y="1016" width="4" height="4"/><rect x="694" y="1023" width="4" height="4"/><rect x="704" y="1023" width="4" height="4"/><rect x="694" y="1030" width="4" height="4"/><rect x="704" y="1030" width="4" height="4"/></g>
<rect x="718" y="1017" width="12" height="15" fill="#4a4a4a" stroke="#7a6a50"/><rect x="742" y="1017" width="10" height="15" fill="#c99a5a"/><rect x="752" y="1017" width="6" height="15" fill="#4a4a4a"/><rect x="766" y="1017" width="6" height="15" fill="#4a4a4a"/><rect x="772" y="1017" width="9" height="15" fill="#c99a5a"/>
<path d="M712 1012V1037M737 1012V1037M762 1012V1037" stroke="#222"/>
<rect x="801" y="1017" width="14" height="15" fill="none" stroke="#ddd" stroke-dasharray="2 2"/><circle cx="808" cy="1025" r="2.5" fill="#ddd"/><use href="#ud" x="825" y="1024"/>
<circle cx="855" cy="1025" r="7" fill="#777"/><circle cx="855" cy="1025" r="3.5" fill="#555"/><use href="#ud" x="870" y="1024"/>
<path d="M893 1033L906 1019Q902 1014 898 1018L892 1025" fill="none" stroke="#eee" stroke-width="3"/>
<path d="M917 1017V1032M925 1017V1032M933 1017V1032M915 1025H935" stroke="#7aaff0" stroke-width="1.5"/><use href="#ud" x="942" y="1024"/>
<circle cx="969" cy="1025" r="8" fill="#ddd" stroke="#333"/><circle cx="966" cy="1022" r="1.5" fill="#333"/><circle cx="972" cy="1022" r="1.5" fill="#333"/><circle cx="969" cy="1029" r="1.5" fill="#333"/>

<path d="M1001 1017L1010 1020V1033L1001 1030Z" fill="#ddd"/><path d="M1010 1020L1019 1017V1030L1010 1033Z" fill="#888"/><path d="M1001 1017L1010 1014L1019 1017L1010 1020Z" fill="#fff"/><use href="#ud" x="1020" y="1024"/>
<text class="h" x="1043" y="1031" textLength="31" lengthAdjust="spacingAndGlyphs">View</text>
<text class="h" x="1099" y="1031" textLength="40" lengthAdjust="spacingAndGlyphs">Select</text>
<text class="h" x="1163" y="1031" textLength="25" lengthAdjust="spacingAndGlyphs">Add</text>
<text class="h" x="1213" y="1031" textLength="36" lengthAdjust="spacingAndGlyphs">Mesh</text>
<rect x="1272" y="1017" width="13" height="15" fill="#c8a270" stroke="#eee"/><use href="#ud" x="1382" y="1024"/>
<text x="1294" y="1031" font-size="15" fill="#eee" textLength="65" lengthAdjust="spacingAndGlyphs">Edit Mode</text>
<circle cx="1410" cy="1025" r="8" fill="#f2f2f2"/><use href="#ud" x="1428" y="1024"/>
<circle cx="1453" cy="1020" r="5" fill="#8ab0e0" stroke="#eee"/><circle cx="1460" cy="1030" r="5" fill="#8ab0e0" stroke="#eee"/><use href="#ud" x="1474" y="1024"/>
<rect x="1512" y="1012" width="26" height="25" fill="#5d8ac8"/>
<path d="M1500 1026V1014" stroke="#3a62c8" stroke-width="2.5"/><path d="M1500 1026L1491 1033" stroke="#d03030" stroke-width="2.5"/><path d="M1500 1026L1509 1033" stroke="#4ab04a" stroke-width="2.5"/>
<path d="M1518 1033L1531 1019M1524 1018H1532V1026" fill="none" stroke="#dbe8ff" stroke-width="2.4"/>
<path d="M1545 1034Q1545 1020 1557 1017" fill="none" stroke="#5d8ac8" stroke-width="3"/>
<path d="M1569 1034L1572 1022H1581V1016" fill="none" stroke="#5d8ac8" stroke-width="3"/>
<path d="M1538 1012V1037M1563 1012V1037M1587 1012V1037" stroke="#222"/>
<text x="1597" y="1031" font-size="15" fill="#eee" textLength="41" lengthAdjust="spacingAndGlyphs">Global</text><use href="#ud" x="1669" y="1024"/>
<g stroke="#555"><path d="M1691 1019L1699 1016L1707 1019V1030L1699 1033L1691 1030Z" fill="#bbb"/><path d="M1715 1019L1723 1016L1731 1019V1030L1723 1033L1715 1030Z" fill="#888"/><path d="M1740 1019L1748 1016L1755 1019V1030L1748 1033L1740 1030Z" fill="#cfa67a"/></g>
<rect x="1770" y="1018" width="13" height="13" fill="none" stroke="#eee" stroke-dasharray="2 2"/><circle cx="1776" cy="1025" r="4" fill="#eee"/>
<circle cx="1811" cy="1025" r="7" fill="#777"/><circle cx="1811" cy="1025" r="3.5" fill="#555"/><use href="#ud" x="1828" y="1024"/>
<path d="M1851 1033L1864 1019Q1860 1014 1856 1018L1850 1025" fill="none" stroke="#eee" stroke-width="3"/>
<path d="M1874 1017V1032M1890 1017V1032M1872 1025H1892" stroke="#7aaff0" stroke-width="1.5"/><use href="#ud" x="1899" y="1024"/>
<rect x="1912" y="1014" width="8" height="22" fill="#6f8fb8"/>
</svg>
</body></html>
